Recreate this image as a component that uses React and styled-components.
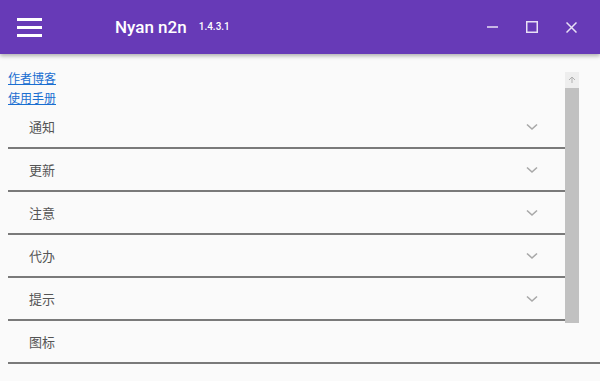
import React from 'react';
import styled, { createGlobalStyle } from 'styled-components';

const GlobalStyle = createGlobalStyle`
  html, body {
    margin: 0;
    padding: 0;
    background-color: #fafafa;
  }
  body {
    font-family: Roboto, "Noto Sans CJK SC", sans-serif;
  }
`

const Page = styled.div`
  width: 600px;
  height: 381px;
  overflow: hidden;
  background-color: #fafafa;
`

const TopBar = styled.header`
  height: 54px;
  background-color: #673ab7;
  box-shadow: 0 2px 4px rgba(0, 0, 0, 0.3);
  display: flex;
  align-items: center;
  color: white;
  position: relative;
  z-index: 1;
`

const MenuButton = styled.div`
  width: 25px;
  margin-left: 17px;
  display: flex;
  flex-direction: column;
  gap: 5px;

  span {
    height: 3px;
    background-color: white;
  }
`

const Title = styled.h1`
  margin: 0 0 0 73px;
  font-size: 17px;
  font-weight: 500;
  font-family: Roboto, sans-serif;
`

const Version = styled.span`
  margin-left: 12px;
  font-size: 10px;
  font-weight: 500;
  font-family: Roboto, sans-serif;
  padding-bottom: 2px;
`

const WindowControls = styled.div`
  margin-left: auto;
  margin-right: 23px;
  display: flex;
  align-items: center;
  gap: 28px;

  svg {
    display: block;
  }
`

const Content = styled.main`
  padding: 18px 0 0 8px;
  display: flex;
  flex-direction: column;
`

const ScrollArea = styled.div`
  display: flex;
  height: 251px;
  width: 571px;
`

const ScrollContent = styled.div`
  flex: 1;
`

const Links = styled.div`
  display: flex;
  flex-direction: column;
  gap: 6px;

  a {
    font-size: 12px;
    line-height: 14px;
    color: #1a6fd1;
    text-decoration: underline;
    width: fit-content;
  }
`

const Row = styled.div`
  height: 41px;
  display: flex;
  align-items: center;
  justify-content: space-between;
  padding: 0 27px 0 21px;
  border-bottom: 2px solid #7a7a7a;
  font-size: 13px;
  color: #555;
  font-family: "Noto Sans CJK SC", sans-serif;
  width: ${(props) => (props.wide ? '556px' : 'auto')};
  margin-top: ${(props) => (props.wide ? '-2px' : '0')};
`

const Scrollbar = styled.div`
  width: 14px;
  display: flex;
  flex-direction: column;
  background-color: #f1f1f1;
`

const ScrollButton = styled.div`
  height: 16px;
  display: flex;
  align-items: center;
  justify-content: center;
  background-color: #eeeeee;
`

const ScrollThumb = styled.div`
  flex: 1;
  background-color: #c1c1c1;
`

const Chevron = () => (
  <svg width="12" height="8" viewBox="0 0 12 8">
    <polyline points="1,1.5 6,6 11,1.5" fill="none" stroke="#a8a8a8" strokeWidth="1.6" />
  </svg>
)

const rows = ['通知', '更新', '注意', '代办', '提示']

const App = () => {
  return (
    <Page>
      <GlobalStyle />
      <TopBar>
        <MenuButton>
          <span />
          <span />
          <span />
        </MenuButton>
        <Title>Nyan n2n</Title>
        <Version>1.4.3.1</Version>
        <WindowControls>
          <svg width="11" height="12" viewBox="0 0 11 12">
            <line x1="0" y1="6" x2="11" y2="6" stroke="#e8e0f5" strokeWidth="1.5" />
          </svg>
          <svg width="12" height="12" viewBox="0 0 12 12">
            <rect x="0.75" y="0.75" width="10.5" height="10.5" fill="none" stroke="#e8e0f5" strokeWidth="1.5" />
          </svg>
          <svg width="11" height="11" viewBox="0 0 11 11">
            <path d="M0.5 0.5 L10.5 10.5 M10.5 0.5 L0.5 10.5" stroke="#e8e0f5" strokeWidth="1.5" />
          </svg>
        </WindowControls>
      </TopBar>
      <Content>
        <ScrollArea>
          <ScrollContent>
            <Links>
              <a href="#blog">作者博客</a>
              <a href="#manual">使用手册</a>
            </Links>
            {rows.map((title) => (
              <Row key={title}>
                <span>{title}</span>
                <Chevron />
              </Row>
            ))}
          </ScrollContent>
          <Scrollbar>
            <ScrollButton>
              <svg width="8" height="8" viewBox="0 0 8 8">
                <path d="M4 7 V1 M1 4 L4 1 L7 4" fill="none" stroke="#b0b0b0" strokeWidth="1" />
              </svg>
            </ScrollButton>
            <ScrollThumb />
          </Scrollbar>
        </ScrollArea>
        <Row wide>
          <span>图标</span>
        </Row>
      </Content>
    </Page>
  )
}

export default App;
